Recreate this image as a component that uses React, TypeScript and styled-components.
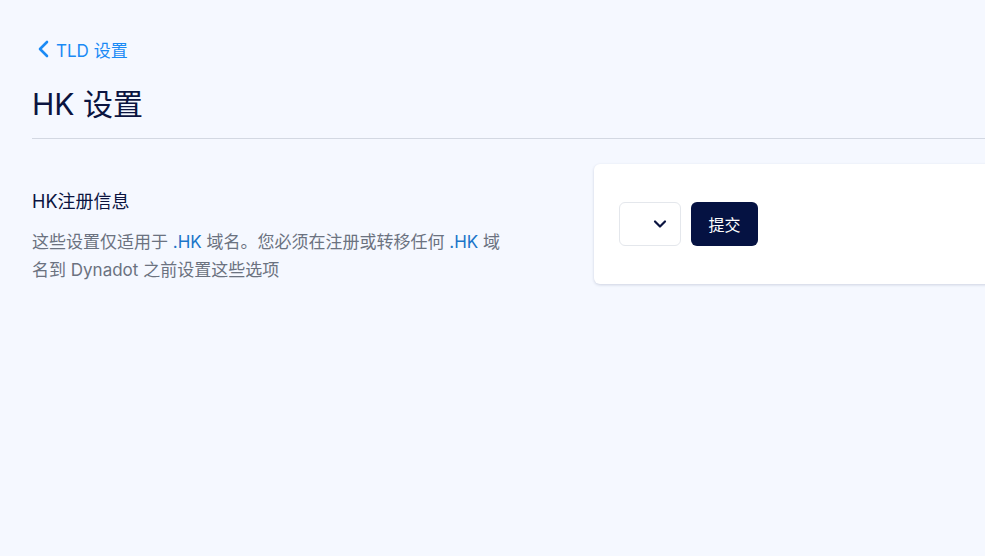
import React from "react";
import styled, { createGlobalStyle } from "styled-components";

const GlobalStyle = createGlobalStyle`
	html, body {
		margin: 0;
		padding: 0;
		background: #f5f8ff;
		overflow: hidden;
	}
	body {
		font-family: Inter, "Noto Sans CJK SC", sans-serif;
		color: #0b1440;
	}
`;

const Page = styled.div`
	width: 1240px;
	min-height: 556px;
	padding: 38px 0 0 32px;
	box-sizing: border-box;
`;

const BackLink = styled.a`
	display: inline-flex;
	align-items: center;
	gap: 7px;
	color: #1a8af5;
	font-size: 17px;
	text-decoration: none;
	cursor: pointer;
	height: 22px;
	margin-left: 5px;

	svg {
		width: 12px;
		height: 18px;
	}
`;

const Title = styled.h1`
	margin: 22px 0 0;
	font-size: 30px;
	font-weight: 400;
	line-height: 40px;
	color: #0b1440;
`;

const Divider = styled.hr`
	border: none;
	border-top: 1px solid #d3d8e2;
	margin: 14px 0 0;
`;

const Section = styled.div`
	display: grid;
	grid-template-columns: 562px 1fr;
	margin-top: 25px;
`;

const Info = styled.div`
	padding-top: 25px;

	h2 {
		margin: 0;
		font-size: 18px;
		font-weight: 400;
		line-height: 26px;
		color: #0b1440;
	}

	p {
		margin: 13px 0 0;
		max-width: 478px;
		font-size: 17px;
		line-height: 28px;
		color: #6b7280;
	}
`;

const Tld = styled.span`
	color: #1b75c9;
`;

const Card = styled.div`
	background: #ffffff;
	border-radius: 6px;
	box-shadow: 0 1px 3px rgba(30, 45, 90, 0.18);
	display: flex;
	align-items: center;
	gap: 10px;
	padding: 37px 25px;
`;

const Select = styled.div`
	width: 62px;
	height: 44px;
	box-sizing: border-box;
	border: 1px solid #e4e7ec;
	border-radius: 6px;
	display: flex;
	align-items: center;
	justify-content: flex-end;
	padding-right: 12px;

	svg {
		width: 16px;
		height: 16px;
	}
`;

const SubmitButton = styled.button`
	height: 44px;
	width: 67px;
	padding: 0;
	border: none;
	border-radius: 6px;
	background: #051242;
	color: #ffffff;
	font-family: Inter, "Noto Sans CJK SC", sans-serif;
	font-size: 16px;
	cursor: pointer;
`;

const App: React.FC = () => {
	return (
		<>
			<GlobalStyle />
			<Page>
				<BackLink>
					<svg viewBox="0 0 12 18" fill="none">
						<path d="M10 2L3 9l7 7" stroke="#1a8af5" strokeWidth="2.6" strokeLinecap="round" strokeLinejoin="round" />
					</svg>
					TLD 设置
				</BackLink>
				<Title>HK 设置</Title>
				<Divider />
				<Section>
					<Info>
						<h2>HK注册信息</h2>
						<p>
							这些设置仅适用于 <Tld>.HK</Tld> 域名。您必须在注册或转移任何 <Tld>.HK</Tld> 域名到 Dynadot 之前设置这些选项
						</p>
					</Info>
					<Card>
						<Select>
							<svg viewBox="0 0 16 16" fill="none">
								<path d="M3 5.5l5 5 5-5" stroke="#0b1440" strokeWidth="2.2" strokeLinecap="round" strokeLinejoin="round" />
							</svg>
						</Select>
						<SubmitButton>提交</SubmitButton>
					</Card>
				</Section>
			</Page>
		</>
	);
};

export default App;
